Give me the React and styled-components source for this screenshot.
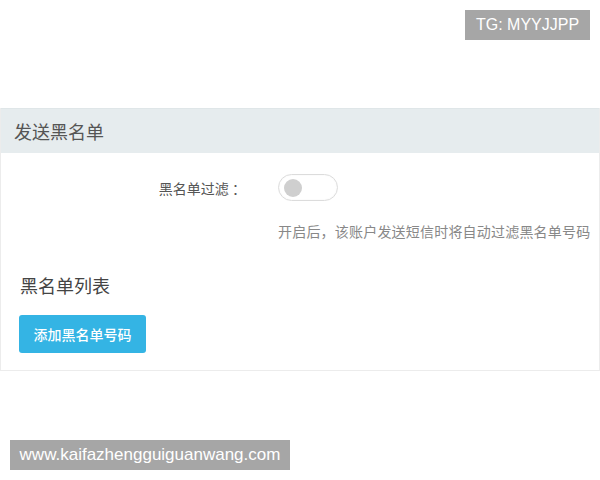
import React from "react";
import styled, { createGlobalStyle } from "styled-components";

const Global = createGlobalStyle`
  html, body { margin: 0; padding: 0; background: #fff; }
  body { font-family: "Noto Sans CJK SC", "Liberation Sans", sans-serif; width: 600px; height: 480px; position: relative; overflow: hidden; }
`;

const Page = styled.div`
  padding-top: 108px;
`;

const Panel = styled.div`
  width: 598px;
  border: 1px solid #ececec;
  border-top: none;
  background: #fff;
`;

const PanelHead = styled.div`
  height: 44px;
  background: #e6ecee;
  border-top: 1px solid #dfe6e8;
  display: flex;
  align-items: center;
  padding-left: 13px;
  font-size: 18px;
  color: #555;
`;

const PanelBody = styled.div`
  padding: 21px 0 17px 19px;
`;

const FormRow = styled.div`
  display: flex;
  align-items: center;
`;

const Label = styled.div`
  width: 226px;
  text-align: right;
  font-size: 14px;
  color: #555;
  padding-right: 32px;
`;

const Switch = styled.div`
  width: 60px;
  height: 27px;
  border: 1px solid #dcdcdc;
  border-radius: 14px;
  background: #fff;
  display: flex;
  align-items: center;
  padding-left: 5px;
  box-sizing: border-box;
  box-shadow: inset 0 0 2px rgba(0,0,0,0.05);
`;

const Knob = styled.span`
  width: 18px;
  height: 18px;
  border-radius: 50%;
  background: #cfcfcf;
`;

const Hint = styled.div`
  margin: 20px 0 0 258px;
  font-size: 14px;
  letter-spacing: 0.2px;
  color: #888;
  white-space: nowrap;
`;

const SubTitle = styled.div`
  margin-top: 31px;
  font-size: 18px;
  color: #444;
`;

const AddButton = styled.button`
  margin-top: 17px;
  margin-left: -1px;
  width: 127px;
  height: 38px;
  border: none;
  border-radius: 3px;
  background: #34b4e4;
  color: #fff;
  font-family: inherit;
  font-size: 14px;
  font-weight: 500;
  padding: 0;
`;

const Badge = styled.div`
  position: absolute;
  background: #a6a6a6;
  color: #fff;
  font-family: "Liberation Sans", Arial, sans-serif;
  font-size: ${(p) => p.fs}px;
  display: flex;
  align-items: center;
  justify-content: center;
  height: 30px;
  left: ${(p) => p.left}px;
  top: ${(p) => p.top}px;
  width: ${(p) => p.w}px;
`;

export default function App() {
  return (
    <>
      <Global />
      <Page>
        <Panel>
          <PanelHead>发送黑名单</PanelHead>
          <PanelBody>
            <FormRow>
              <Label>黑名单过滤 ：</Label>
              <Switch>
                <Knob />
              </Switch>
            </FormRow>
            <Hint>开启后，该账户发送短信时将自动过滤黑名单号码</Hint>
            <SubTitle>黑名单列表</SubTitle>
            <AddButton>添加黑名单号码</AddButton>
          </PanelBody>
        </Panel>
      </Page>
      <Badge left={465} top={10} w={125} fs={16}>TG: MYYJJPP</Badge>
      <Badge left={10} top={440} w={280} fs={17}>www.kaifazhengguiguanwang.com</Badge>
    </>
  );
}
